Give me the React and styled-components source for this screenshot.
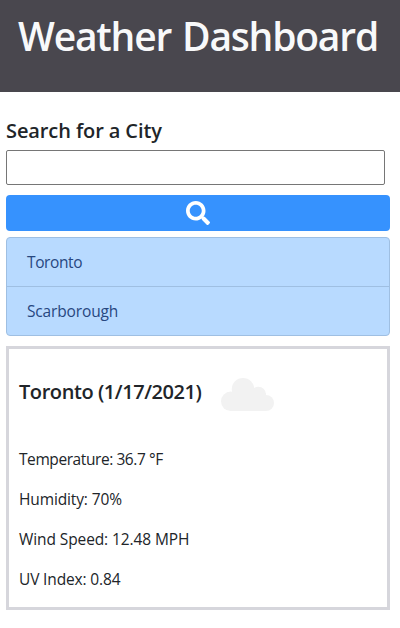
import React from "react";
import styled, { createGlobalStyle } from "styled-components";
import { FaSearch } from "react-icons/fa";

const GlobalStyle = createGlobalStyle`
  *, *::before, *::after { box-sizing: border-box; }
  body {
    margin: 0;
    background: #fff;
    color: #212529;
    font: 400 16px/24px "Open Sans", "Noto Sans", sans-serif;
  }
`;

const Header = styled.header`
  height: 92px;
  padding-top: 12px;
  background: #49474e;
  text-align: center;
`;

const Title = styled.h1`
  margin: 0;
  margin-right: 4px;
  color: #f8f9fa;
  font-size: 39px;
  font-weight: 600;
  line-height: 48px;
  letter-spacing: -1.2px;
  word-spacing: 2px;
  white-space: nowrap;
`;

const Content = styled.main`
  padding: 27px 10px 0 6px;
`;

const Label = styled.label`
  display: block;
  font-size: 20px;
  font-weight: 600;
  line-height: 24px;
  letter-spacing: -0.1px;
`;

const SearchInput = styled.input`
  display: block;
  width: 379px;
  height: 35px;
  margin-top: 7px;
  border: 1px solid #767676;
  border-radius: 2px;
  background: #fff;
`;

const SearchButton = styled.button`
  display: flex;
  align-items: center;
  justify-content: center;
  width: 100%;
  height: 36px;
  margin-top: 10px;
  padding: 0;
  border: 0;
  border-radius: 4px;
  background: #3692fe;
  color: #fff;
`;

const CityList = styled.ul`
  margin: 6px 0 0;
  padding: 0;
  list-style: none;
  border: 1px solid #9fbfe2;
  border-radius: 4px;
  background: #b8daff;
`;

const City = styled.li`
  height: 48px;
  padding: 12px 20px 0;
  color: #27477f;
  font-size: 15.5px;
  letter-spacing: ${(p) => p.$spacing};
  & + & {
    height: 49px;
    border-top: 1px solid #9fbfe2;
  }
`;

const Card = styled.section`
  height: 264px;
  margin-top: 10px;
  padding: 0 10px;
  border: 3px solid #d6d6dc;
`;

const CardHeader = styled.div`
  display: flex;
  height: 98px;
  padding-top: 31px;
`;

const CardTitle = styled.h2`
  width: 201px;
  margin: 0;
  font-size: 20px;
  font-weight: 600;
  line-height: 24px;
  letter-spacing: -0.43px;
  white-space: nowrap;
`;

const CloudIcon = styled.svg`
  display: block;
  width: 55px;
  height: 36px;
  margin-top: -3px;
`;

const Reading = styled.p`
  margin: 0 0 16px;
  font-size: 15.5px;
  letter-spacing: ${(p) => p.$spacing};
  white-space: nowrap;
`;

const cities = [
  { name: "Toronto", spacing: "-0.4px" },
  { name: "Scarborough", spacing: "-0.15px" },
];

const readings = [
  { text: "Temperature: 36.7 °F", spacing: "-0.42px" },
  { text: "Humidity: 70%", spacing: "-0.13px" },
  { text: "Wind Speed: 12.48 MPH", spacing: "-0.1px" },
  { text: "UV Index: 0.84", spacing: "-0.15px" },
];

export default function App() {
  return (
    <>
      <GlobalStyle />
      <Header>
        <Title>Weather Dashboard</Title>
      </Header>
      <Content>
        <Label htmlFor="city">Search for a City</Label>
        <SearchInput id="city" type="text" />
        <SearchButton type="button" aria-label="Search">
          <FaSearch size={24} />
        </SearchButton>
        <CityList>
          {cities.map((c) => (
            <City key={c.name} $spacing={c.spacing}>{c.name}</City>
          ))}
        </CityList>
        <Card>
          <CardHeader>
            <CardTitle>Toronto (1/17/2021)</CardTitle>
            <CloudIcon viewBox="0 0 55 36" fill="#f2f2f2">
              <circle cx="10.700" cy="24.300" r="9.700" />
              <circle cx="23" cy="12.200" r="11.200" />
              <circle cx="38.500" cy="17.200" r="7.500" />
              <circle cx="46" cy="26" r="8" />
              <rect x="10" y="16" width="36" height="18" />
            </CloudIcon>
          </CardHeader>
          {readings.map((r) => (
            <Reading key={r.text} $spacing={r.spacing}>{r.text}</Reading>
          ))}
        </Card>
      </Content>
    </>
  );
}
